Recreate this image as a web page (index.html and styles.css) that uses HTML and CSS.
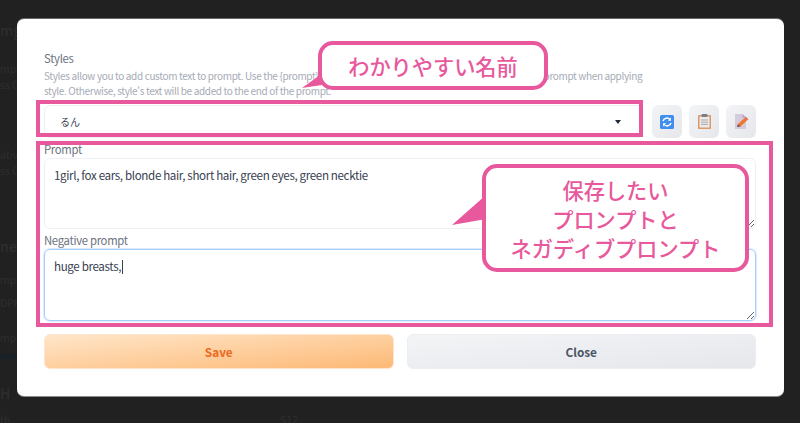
FILE: index.html
```html
<!DOCTYPE html>
<html lang="ja">
  <head>
    <meta charset="UTF-8">
    <title>Styles</title>
    <link rel="stylesheet" href="styles.css">
  </head>
  <body>
    <div class="backdrop">
      <p class="bg-line bg-big first">mg</p>
      <p class="bg-line gap-a">mpt</p>
      <p class="bg-line">ss C</p>
      <p class="bg-line gap-b">ative</p>
      <p class="bg-line">ss C</p>
      <p class="bg-line bg-big gap-c">ne</p>
      <p class="bg-line gap-d">mpl</p>
      <p class="bg-line gap-e">DPM</p>
      <p class="bg-line gap-f">mpl</p>
      <div class="bg-bar"></div>
      <p class="bg-line bg-big gap-g">H</p>
      <div class="bg-last">
        <span>th</span>
        <span>512</span>
      </div>
    </div>

    <div class="modal">
      <div class="label">Styles</div>
      <p class="info">Styles allow you to add custom text to prompt. Use the {prompt} token in style text, and it will be replaced with user's prompt when applying<br>style. Otherwise, style's text will be added to the end of the prompt.</p>

      <div class="style-row">
        <div class="select">
          <span>るん</span>
          <i class="arrow"></i>
        </div>
        <button class="tool">
          <svg width="14" height="14" viewBox="0 0 14 14">
            <rect width="14" height="14" rx="1.5" fill="#3f8ef0"/>
            <path d="M3 6.2a4 4 0 0 1 7-1.6" fill="none" stroke="#fff" stroke-width="1.5"/>
            <path d="M11 2.6v3.2H7.8z" fill="#fff"/>
            <path d="M11 7.8a4 4 0 0 1-7 1.6" fill="none" stroke="#fff" stroke-width="1.5"/>
            <path d="M3 11.4V8.2h3.2z" fill="#fff"/>
          </svg>
        </button>
        <button class="tool">
          <svg width="13" height="15" viewBox="0 0 13 15">
            <rect y="1" width="13" height="14" rx="1" fill="#d99a6c"/>
            <rect x="1.5" y="2.5" width="10" height="11" fill="#eceaea"/>
            <rect x="3.5" y="0" width="6" height="3" rx="1" fill="#7d7f88"/>
            <path d="M3 6h7M3 8.2h7M3 10.4h7" stroke="#a9a7ab" stroke-width="1"/>
          </svg>
        </button>
        <button class="tool">
          <svg width="15" height="15" viewBox="0 0 15 15">
            <path d="M1 0h7.500L12 3.500V15H1z" fill="#d6cbdc"/>
            <path d="M8.500 0v3.500H12z" fill="#b5a8bd"/>
            <path d="M3 13l1-3 6.500-6 2.500 2.500-6.500 6z" fill="#f0782c"/>
            <path d="M3 13l1-3 2.500 2.500z" fill="#6b5a66"/>
            <path d="M10.500 4l1.300-1.200 2.500 2.500L13 6.500z" fill="#ee5f5a"/>
          </svg>
        </button>
      </div>

      <div class="label field-label">Prompt</div>
      <div class="field">1girl, fox ears, blonde hair, short hair, green eyes, green necktie</div>
      <div class="label field-label">Negative prompt</div>
      <div class="field focused">huge breasts,<span class="caret"></span></div>

      <div class="actions">
        <button class="btn save">Save</button>
        <button class="btn close">Close</button>
      </div>
    </div>

    <div class="frame frame-style"></div>
    <div class="frame frame-prompt"></div>

    <div class="callout callout-name">
      <svg class="tail tail-name" width="20" height="18" viewBox="0 0 20 18">
        <polygon points="0,15 18,2 20,12" fill="#e8589c"/>
      </svg>
      わかりやすい名前
    </div>
    <div class="callout callout-save">
      <svg class="tail tail-save" width="35" height="32" viewBox="0 0 35 32">
        <polygon points="1,30 35,0 35,24" fill="#e8589c"/>
      </svg>
      保存したい<br>プロンプトと<br>ネガディブプロンプト
    </div>
  </body>
</html>
```

FILE: styles.css
```css
body {
  font-family: "Noto Sans CJK JP", "Noto Sans", sans-serif;
  margin: 0;
  height: 423px;
  overflow: hidden;
  background-color: #212121;
}

.backdrop {
  color: #2e2e2e;
  font-size: 10.5px;
}

.bg-line {
  margin: 0;
  height: 16px;
  line-height: 16px;
}

.bg-big {
  font-size: 14px;
  font-weight: 500;
  height: 22px;
  line-height: 22px;
}

.first { margin-top: 19px; }
.gap-a { margin-top: 20px; }
.gap-b { margin-top: 54px; }
.gap-c { margin-top: 56px; }
.gap-d { margin-top: 15px; }
.gap-e { margin-top: 7px; }
.gap-f { margin-top: 19px; }
.gap-g { margin-top: 23px; }

.bg-bar {
  width: 17px;
  height: 5px;
  margin-top: 8px;
  background-color: #1a2028;
}

.bg-last {
  display: flex;
  gap: 270px;
  margin-top: 8px;
  line-height: 16px;
}

.modal {
  position: absolute;
  left: 17px;
  top: 19px;
  width: 767px;
  height: 377px;
  box-sizing: border-box;
  padding: 29px 28px 0 27px;
  background-color: #fff;
  border-radius: 7px;
  box-shadow: 0 1px 0 #8a8a8a, 0 -1px 0 #6a6a6a;
}

.label {
  font-size: 11.3px;
  letter-spacing: -0.3px;
  line-height: 20px;
  color: #6b7280;
}

.info {
  margin: 0;
  font-size: 10px;
  letter-spacing: -0.36px;
  line-height: 15px;
  color: #a6abb6;
  white-space: nowrap;
}

.style-row {
  display: flex;
  align-items: stretch;
  height: 33px;
  margin-top: 7px;
}

.select {
  display: flex;
  align-items: center;
  justify-content: space-between;
  width: 599px;
  box-sizing: border-box;
  padding: 0 21px 0 15px;
  margin-right: 9px;
  font-size: 10px;
  color: #374151;
  border: 1px solid #eef0f3;
  border-radius: 6px;
}

.arrow {
  width: 0;
  height: 0;
  border-left: 3px solid transparent;
  border-right: 3px solid transparent;
  border-top: 4px solid #1f2937;
}

.tool {
  display: flex;
  align-items: center;
  justify-content: center;
  width: 30px;
  padding: 0;
  margin-right: 7px;
  border: none;
  border-radius: 6px;
  background: linear-gradient(to bottom right, #f3f4f6, #e5e7eb);
}

.tool:last-child {
  margin-right: 0;
}

.field-label {
  height: 16px;
  line-height: 16px;
  margin-top: 3px;
  margin-bottom: 1px;
}

.field {
  height: 71px;
  box-sizing: border-box;
  padding: 6px 9px;
  font-size: 11.6px;
  letter-spacing: -0.36px;
  line-height: 20px;
  color: #374151;
  border: 1px solid #eef0f3;
  border-radius: 6px;
  overflow: auto;
  resize: vertical;
}

.focused {
  height: 72px;
  border: 1px solid #a8d0fb;
  box-shadow: 0 0 0 1px #dbeafe;
}

.caret {
  display: inline-block;
  width: 1px;
  height: 14px;
  margin-left: 1px;
  vertical-align: -3px;
  background-color: #374151;
}

.actions {
  display: flex;
  gap: 13px;
  margin-top: 13px;
}

.btn {
  flex: 1;
  height: 35px;
  padding: 0;
  font-family: inherit;
  font-size: 11.8px;
  font-weight: 700;
  border-radius: 6px;
}

.save {
  color: #ea6a1f;
  border: 1px solid #fde6cf;
  background: linear-gradient(to bottom right, #ffe6c9, #fdb976);
}

.close {
  color: #4b5563;
  border: 1px solid #eceef1;
  background: linear-gradient(to bottom right, #f3f4f6, #e5e7eb);
}

.frame {
  position: absolute;
  box-sizing: border-box;
  border: 4px solid #e8589c;
}

.frame-style {
  left: 36px;
  top: 100px;
  width: 607px;
  height: 37px;
}

.frame-prompt {
  left: 36px;
  top: 141px;
  width: 737px;
  height: 186px;
}

.callout {
  position: absolute;
  box-sizing: border-box;
  display: flex;
  align-items: center;
  justify-content: center;
  text-align: center;
  font-weight: 500;
  font-size: 21.2px;
  color: #e8589c;
  background-color: #fff;
  border: 4px solid #e8589c;
  border-radius: 15px;
}

.callout-name {
  left: 318px;
  top: 41px;
  width: 230px;
  height: 49px;
}

.callout-save {
  left: 482px;
  top: 164px;
  width: 267px;
  height: 108px;
  line-height: 29px;
}

.tail {
  position: absolute;
}

.tail-name {
  left: -20px;
  top: 28px;
}

.tail-save {
  left: -35px;
  top: 27px;
}
```
